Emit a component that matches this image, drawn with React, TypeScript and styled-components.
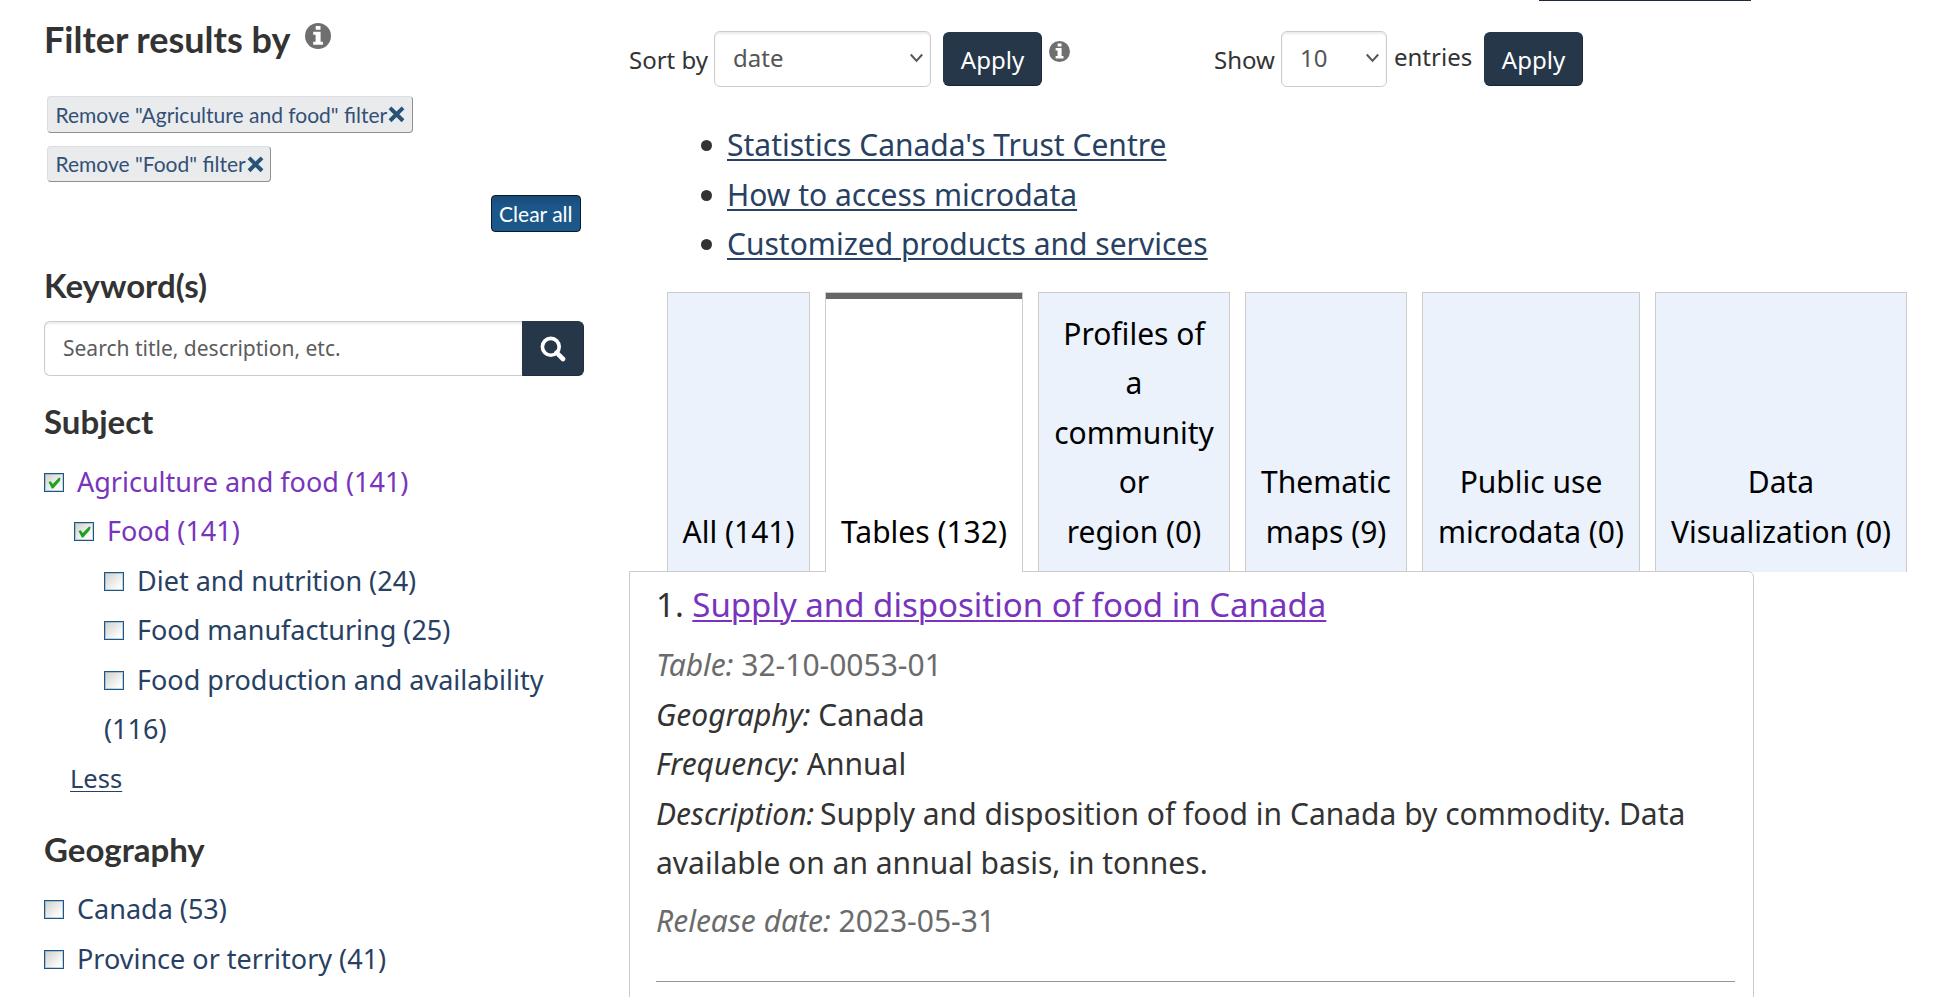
import React from 'react';
import styled, { createGlobalStyle } from 'styled-components';

const GlobalStyle = createGlobalStyle`
  *, *::before, *::after { box-sizing: border-box; }
  html, body { margin: 0; height: 997px; overflow: hidden; background: #fff; }
  body { font: 30px/49.5px "Noto Sans", sans-serif; color: #333; }
`;

const Page = styled.div`
  display: flex;
  align-items: flex-start;
  width: 1939px;
  height: 997px;
  overflow: hidden;
`;

/* ---------- sidebar ---------- */

const Sidebar = styled.aside`
  width: 584px;
  flex: none;
  padding: 19px 0 0 44px;
`;

const Title = styled.h2`
  display: flex;
  margin: 0 0 37px;
  font: 700 36px/40px Lato, sans-serif;
  gap: 15px;
  & > svg { margin-top: 4px; }
`;

const SectionTitle = styled.h3<{ $top: number; $bottom: number }>`
  margin: ${p => p.$top}px 0 ${p => p.$bottom}px;
  font: 700 33px/36px Lato, sans-serif;
`;

const Chips = styled.div`
  display: flex;
  flex-direction: column;
  align-items: flex-start;
  gap: 13px;
  padding: 0 3px;
`;

const Chip = styled.button`
  display: flex;
  align-items: center;
  height: 36.5px;
  padding: 1px 7.5px 0;
  border: 1px solid;
  border-color: #dcdee1 #8d8f92 #8d8f92 #dcdee1;
  border-radius: 4px;
  background: #eaebed;
  color: #335075;
  font: 21px/34px Lato, sans-serif;
  white-space: nowrap;
  & > svg { margin: 0 -1px 0 1px; }
`;

const ClearAll = styled(Chip)`
  align-self: flex-end;
  border-color: #091c2d;
  background: linear-gradient(#1a4a75, #1c578a 30%);
  color: #fff;
`;

const SearchBox = styled.div`
  display: flex;
  height: 55px;
`;

const SearchField = styled.div`
  flex: 1;
  padding-left: 18px;
  border: 1px solid #ccc;
  border-right: 0;
  border-radius: 6px 0 0 6px;
  box-shadow: inset 0 2px 2px rgba(0, 0, 0, 0.075);
  color: #5c5c5c;
  font-size: 21px;
  line-height: 53px;
`;

const SearchButton = styled.button`
  display: flex;
  align-items: center;
  justify-content: center;
  width: 62px;
  padding: 0;
  border: 1px solid #222c3a;
  border-top-color: #26374a;
  border-left-color: #26374a;
  border-radius: 0 6px 6px 0;
  background: #26374a;
`;

const Facets = styled.ul`
  margin: 0;
  padding: 0;
  list-style: none;
  font-size: 27px;
`;

const Facet = styled.li<{ $level: number; $visited?: boolean }>`
  padding-left: ${p => p.$level * 30}px;
  color: ${p => (p.$visited ? '#7834bc' : '#284162')};
`;

const Check = styled.span`
  display: inline-block;
  overflow: hidden;
  width: 20px;
  height: 19px;
  padding: 3px 0 0 2.5px;
  margin-right: 13px;
  border: 1px solid #1c578a;
  box-shadow: inset 0 0 0 1px rgba(28, 87, 138, 0.25);
  background: linear-gradient(135deg, #cfcfca, #fff 85%);
  vertical-align: baseline;
  & > svg { display: block; }
`;

const LessLink = styled.a`
  display: block;
  width: fit-content;
  margin-left: 26px;
  color: #284162;
  font-size: 25.5px;
  text-decoration: underline;
  text-decoration-thickness: 1px;
  text-underline-offset: 3px;
`;

/* ---------- main column ---------- */

const Main = styled.main`
  flex: none;
  width: 1310px;
  margin-left: 45px;
`;

const TopRule = styled.div`
  width: 212px;
  height: 1px;
  margin-left: 910px;
  background: #1f2b3a;
`;

const Toolbar = styled.div`
  display: flex;
  margin-top: 30px;
  font-size: 24px;
  line-height: 56px;
  white-space: nowrap;
`;

const Control = styled.div<{ $width?: number }>`
  display: flex;
  width: ${p => (p.$width ? `${p.$width}px` : 'auto')};
  & > svg { margin: 10px 0 0 7px; }
`;

const Label = styled.span<{ $width: number }>`
  width: ${p => p.$width}px;
  padding-top: 1px;
`;

const Select = styled.div<{ $width: number }>`
  display: flex;
  align-items: center;
  justify-content: space-between;
  width: ${p => p.$width}px;
  height: 56px;
  padding: 0 6px 2px 18px;
  border: 1px solid #ccc;
  border-radius: 6px;
  box-shadow: inset 0 2px 2px rgba(0, 0, 0, 0.075);
  color: #555;
`;

const Entries = styled.span`
  width: 97px;
  padding-left: 7px;
  line-height: 52px;
`;

const ApplyButton = styled.button<{ $gap: number }>`
  width: 99px;
  height: 54px;
  margin: 1px 0 0 ${p => p.$gap}px;
  padding: 1px 0 0;
  border: 1px solid #26374a;
  border-bottom-color: #1a2431;
  border-right-color: #1f2b3a;
  border-radius: 6px;
  background: #26374a;
  color: #fff;
  font: 24px/51px "Noto Sans", sans-serif;
`;

const Links = styled.ul`
  margin: 32px 0 0;
  padding: 0 0 0 100px;
  li { text-indent: -2px; }
  a {
    color: #284162;
    text-decoration: underline;
    text-decoration-thickness: 2px;
    text-underline-offset: 3px;
  }
`;

const Tabs = styled.div`
  display: flex;
  gap: 15px;
  height: 280px;
  margin: 23.5px 0 0 38px;
`;

const Tab = styled.div<{ $width: number; $active?: boolean }>`
  display: flex;
  align-items: flex-end;
  justify-content: center;
  flex: none;
  width: ${p => p.$width}px;
  padding-bottom: 16px;
  border: 1px solid #ccc;
  border-bottom: 0;
  background: ${p => (p.$active ? '#fff' : '#ebf2fc')};
  box-shadow: ${p => (p.$active ? 'inset 0 6px 0 #666' : 'none')};
  position: relative;
  z-index: ${p => (p.$active ? 2 : 0)};
  color: #000;
  text-align: center;
  white-space: pre-line;
`;

const Panel = styled.section`
  position: relative;
  z-index: 1;
  width: 1125px;
  height: 500px;
  margin-top: -1px;
  padding: 8px 18px 0 26px;
  border: 1px solid #ccc;
  border-radius: 0 6px 6px 6px;
  background: #fff;
`;

const ResultTitle = styled.div`
  margin-bottom: 10.5px;
  font-size: 33px;
  a {
    color: #7834bc;
    text-decoration: underline;
    text-decoration-thickness: 2px;
    text-underline-offset: 3px;
  }
`;

const Detail = styled.div<{ $muted?: boolean; $top?: number }>`
  margin-top: ${p => p.$top || 0}px;
  color: ${p => (p.$muted ? '#6b6b6b' : '#333')};
`;

const TightTerm = styled.em`
  margin-right: -2px;
`;

const Divider = styled.hr`
  margin: 35.5px 0 0;
  border: 0;
  border-top: 1px solid #959595;
`;

const InfoIcon = ({ size }: { size: number }) => (
  <svg width={size} height={size} viewBox="0 0 26 26">
    <circle cx="13" cy="13" r="13" fill="#6f6f6f" />
    <path fill="#fff" d="M10.7 3h4.8v3.8h-4.8zM8.2 8.8h7.4v9.9h2.3v3H8.2v-3h2.4v-6.9H8.2z" />
  </svg>
);

const CrossIcon = () => (
  <svg width="17" height="17" viewBox="0 0 17 17">
    <path d="M2 1.9 15 14.7M15 1.9 2 14.7" stroke="#295376" strokeWidth="4" />
  </svg>
);

const SearchIcon = () => (
  <svg width="26" height="26" viewBox="0 0 26 26" fill="none" stroke="#fff">
    <circle cx="10.8" cy="10.8" r="8.4" strokeWidth="3.6" />
    <path d="M16.6 16.6 23 23" strokeWidth="4.6" strokeLinecap="round" />
  </svg>
);

const TickIcon = () => (
  <svg width="13" height="12" viewBox="0 0 13 12">
    <path d="M0.5 5 2.8 4.2 4.8 7 10.8 0.8 12.5 0.8 12 3.8 5.2 11.4 3.8 11.4Z" fill="#21a121" />
  </svg>
);

const Chevron = () => (
  <svg width="15" height="10" viewBox="0 0 15 10" fill="none">
    <path d="M1.8 1.5 7.5 7.8 13.2 1.5" stroke="#555" strokeWidth="2" />
  </svg>
);

type FacetItem = { text: string; level: number; checked?: boolean };

const subjects: FacetItem[] = [
  { text: 'Agriculture and food (141)', level: 0, checked: true },
  { text: 'Food (141)', level: 1, checked: true },
  { text: 'Diet and nutrition (24)', level: 2 },
  { text: 'Food manufacturing (25)', level: 2 },
  { text: 'Food production and availability (116)', level: 2 },
];

const places: FacetItem[] = [
  { text: 'Canada (53)', level: 0 },
  { text: 'Province or territory (41)', level: 0 },
];

const tabs = [
  { text: 'All (141)', width: 143 },
  { text: 'Tables (132)', width: 198, active: true },
  { text: 'Profiles of\na\ncommunity\nor\nregion (0)', width: 192 },
  { text: 'Thematic\nmaps (9)', width: 162 },
  { text: 'Public use\nmicrodata (0)', width: 218 },
  { text: 'Data\nVisualization (0)', width: 252 },
];

const FacetList = ({ items }: { items: FacetItem[] }) => (
  <Facets>
    {items.map(item => (
      <Facet key={item.text} $level={item.level} $visited={item.checked}>
        <Check>{item.checked && <TickIcon />}</Check>
        {item.text}
      </Facet>
    ))}
  </Facets>
);

export default function App() {
  return (
    <>
      <GlobalStyle />
      <Page>
        <Sidebar>
          <Title>
            Filter results by
            <InfoIcon size={26} />
          </Title>
          <Chips>
            <Chip>Remove "Agriculture and food" filter<CrossIcon /></Chip>
            <Chip>Remove "Food" filter<CrossIcon /></Chip>
            <ClearAll>Clear all</ClearAll>
          </Chips>
          <SectionTitle $top={35.5} $bottom={18}>Keyword(s)</SectionTitle>
          <SearchBox>
            <SearchField>Search title, description, etc.</SearchField>
            <SearchButton><SearchIcon /></SearchButton>
          </SearchBox>
          <SectionTitle $top={27} $bottom={17.5}>Subject</SectionTitle>
          <FacetList items={subjects} />
          <LessLink>Less</LessLink>
          <SectionTitle $top={27.5} $bottom={17.5}>Geography</SectionTitle>
          <FacetList items={places} />
        </Sidebar>
        <Main>
          <TopRule />
          <Toolbar>
            <Control $width={585}>
              <Label $width={85}>Sort by</Label>
              <Select $width={217}>date<Chevron /></Select>
              <ApplyButton $gap={12}>Apply</ApplyButton>
              <InfoIcon size={21} />
            </Control>
            <Control>
              <Label $width={67}>Show</Label>
              <Select $width={106}>10<Chevron /></Select>
              <Entries>entries</Entries>
              <ApplyButton $gap={0}>Apply</ApplyButton>
            </Control>
          </Toolbar>
          <Links>
            <li><a>Statistics Canada's Trust Centre</a></li>
            <li><a>How to access microdata</a></li>
            <li><a>Customized products and services</a></li>
          </Links>
          <Tabs>
            {tabs.map(tab => (
              <Tab key={tab.text} $width={tab.width} $active={tab.active}>{tab.text}</Tab>
            ))}
          </Tabs>
          <Panel>
            <ResultTitle>1. <a>Supply and disposition of food in Canada</a></ResultTitle>
            <Detail $muted><em>Table:</em> 32-10-0053-01</Detail>
            <Detail><em>Geography:</em> Canada</Detail>
            <Detail><em>Frequency:</em> Annual</Detail>
            <Detail>
              <TightTerm>Description:</TightTerm> Supply and disposition of food in Canada by commodity. Data
              <br />
              available on an annual basis, in tonnes.
            </Detail>
            <Detail $muted $top={8.5}><em>Release date:</em> 2023-05-31</Detail>
            <Divider />
          </Panel>
        </Main>
      </Page>
    </>
  );
}
